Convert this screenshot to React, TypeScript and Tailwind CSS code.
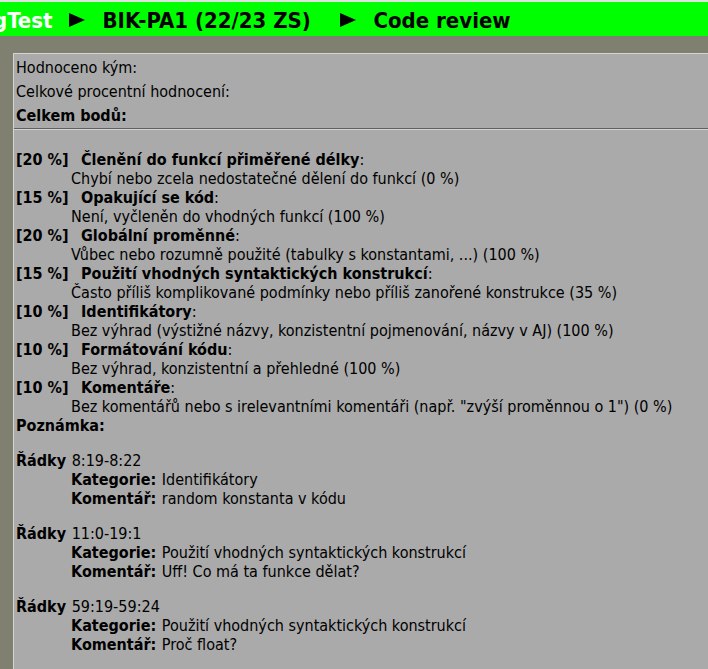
const criteria = [
  { weight: 20, name: 'Členění do funkcí přiměřené délky', result: 'Chybí nebo zcela nedostatečné dělení do funkcí (0 %)' },
  { weight: 15, name: 'Opakující se kód', result: 'Není, vyčleněn do vhodných funkcí (100 %)' },
  { weight: 20, name: 'Globální proměnné', result: 'Vůbec nebo rozumně použité (tabulky s konstantami, ...) (100 %)' },
  { weight: 15, name: 'Použití vhodných syntaktických konstrukcí', result: 'Často příliš komplikované podmínky nebo příliš zanořené konstrukce (35 %)' },
  { weight: 10, name: 'Identifikátory', result: 'Bez výhrad (výstižné názvy, konzistentní pojmenování, názvy v AJ) (100 %)' },
  { weight: 10, name: 'Formátování kódu', result: 'Bez výhrad, konzistentní a přehledné (100 %)' },
  { weight: 10, name: 'Komentáře', result: 'Bez komentářů nebo s irelevantními komentáři (např. "zvýší proměnnou o 1") (0 %)' },
];

const notes = [
  { lines: '8:19-8:22', category: 'Identifikátory', comment: 'random konstanta v kódu' },
  { lines: '11:0-19:1', category: 'Použití vhodných syntaktických konstrukcí', comment: 'Uff! Co má ta funkce dělat?' },
  { lines: '59:19-59:24', category: 'Použití vhodných syntaktických konstrukcí', comment: 'Proč float?' },
];

function Arrow() {
  return (
    <svg viewBox="0 0 16 14" className="mx-[17px] h-[14px] w-4 shrink-0" aria-hidden="true">
      <path d="M0 0L16 7L0 14Z" fill="black" />
    </svg>
  );
}

export default function App() {
  return (
    <div className="flex min-h-screen flex-col overflow-hidden bg-[#808070] font-['Tahoma','DejaVu_Sans_Condensed','Noto_Sans',sans-serif] text-[16px] leading-[19px] text-black">
      <nav className="flex h-9 items-center border-t-2 border-[#e0e0e0] bg-[#00ff00] pt-[2px] text-[22px] font-bold whitespace-nowrap">
        <a href="#progtest" className="-ml-[7px] text-white">gTest</a>
        <Arrow />
        <a href="#course" className="min-w-[221px]">BIK-PA1 (22/23 ZS)</a>
        <Arrow />
        <span>Code review</span>
      </nav>
      <main className="mt-[17px] ml-[13px] grow border-t border-l border-[#d4d4d4] bg-[#aaaaaa]">
        <header className="border-b border-[#606060] px-[2px] pt-[2px] leading-6">
          <p>Hodnoceno kým:</p>
          <p>Celkové procentní hodnocení:</p>
          <p className="font-bold">Celkem bodů:</p>
        </header>
        <section className="border-t border-[#d4d4d4] px-[2px] pt-5">
          <dl>
            {criteria.map((c) => (
              <div key={c.name}>
                <dt className="flex">
                  <b className="w-[65px]">[{c.weight} %]</b>
                  <span><b>{c.name}</b>:</span>
                </dt>
                <dd className="ml-[55px]">{c.result}</dd>
              </div>
            ))}
          </dl>
          <h2 className="font-bold">Poznámka:</h2>
          {notes.map((n) => (
            <dl key={n.lines} className="mt-4">
              <dt><b className="mr-px">Řádky</b> {n.lines}</dt>
              <dd className="ml-[55px]"><b className="mr-px">Kategorie:</b> {n.category}</dd>
              <dd className="ml-[55px]"><b className="mr-px">Komentář:</b> {n.comment}</dd>
            </dl>
          ))}
        </section>
      </main>
    </div>
  );
}
